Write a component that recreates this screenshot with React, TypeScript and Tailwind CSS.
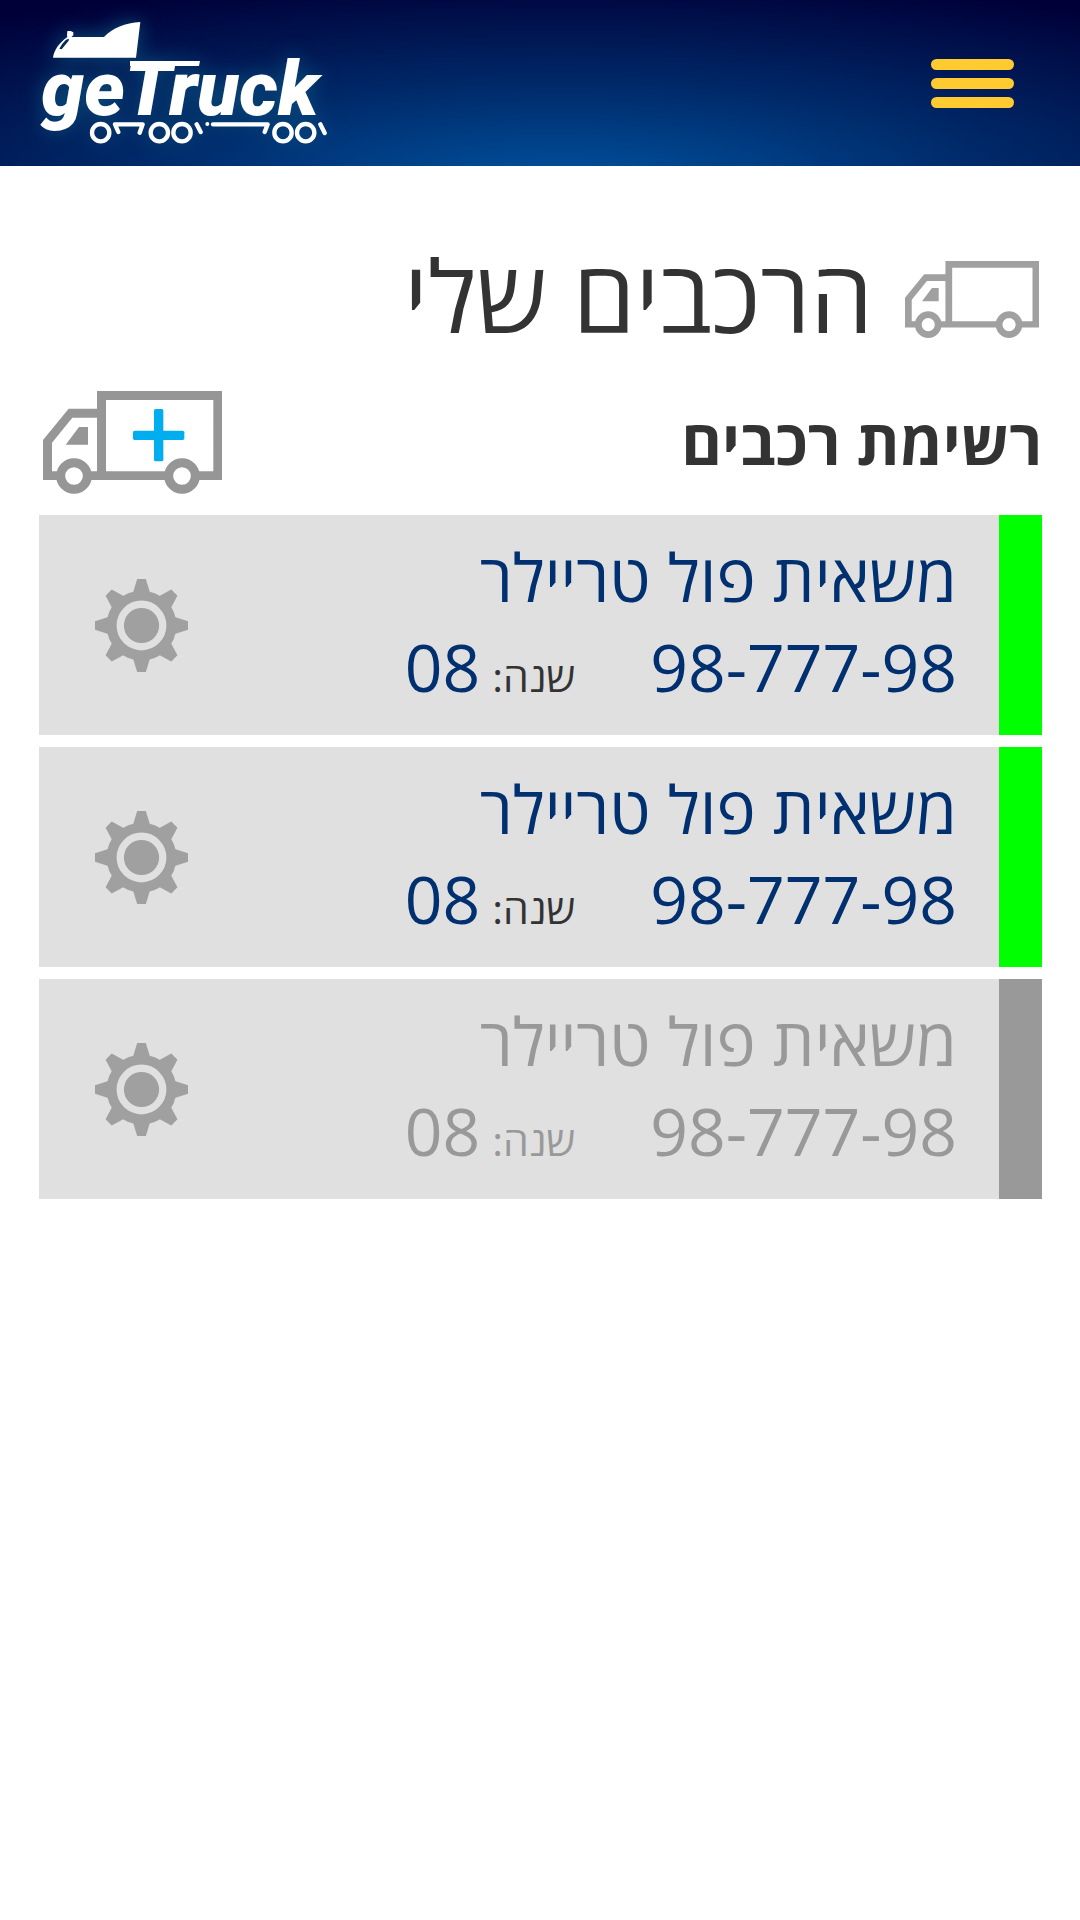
type Vehicle = {
  id: number
  name: string
  plate: string
  year: string
  active: boolean
}

const vehicles: Vehicle[] = [
  { id: 1, name: 'משאית פול טריילר', plate: '98-777-98', year: '08', active: true },
  { id: 2, name: 'משאית פול טריילר', plate: '98-777-98', year: '08', active: true },
  { id: 3, name: 'משאית פול טריילר', plate: '98-777-98', year: '08', active: false },
]

function Logo() {
  return (
    <svg
      viewBox="30 30 864 378"
      className="w-[288px] drop-shadow-[0_0_10px_#0a4f7c]"
      direction="ltr"
      role="img"
      aria-label="geTruck"
    >
      {/* cab */}
      <path
        fill="#fff"
        fillRule="evenodd"
        d="M69 143C72 122 84 102 112 81L111 76L112 63L122 63L130 67L130 76L124 81H222C248 54 285 39 331 36L318 143ZM88 116L95 118L116 92L117 86L108 89Q96 100 88 116Z"
      />
      <text
        x="34"
        y="316"
        fill="#fff"
        fontSize="230"
        className="font-['Roboto',sans-serif] font-black italic"
      >
        geTruck
      </text>
      {/* roof line */}
      <path fill="#fff" d="M300 153H510L507 168H300Z" />
      {/* chassis and wheels */}
      <g fill="none" stroke="#fff" strokeWidth="13">
        <circle cx="212" cy="368" r="26" />
        <circle cx="388" cy="368" r="26" />
        <circle cx="456" cy="368" r="26" />
        <circle cx="759" cy="368" r="26" />
        <circle cx="827" cy="368" r="26" />
        <path strokeLinecap="round" strokeLinejoin="round" d="M265 366L255 343H338L329 368M500 343L512 366M549 343H713L704 366M871 343L884 369" />
      </g>
      <circle cx="532" cy="342" r="6" fill="#fff" />
    </svg>
  )
}

function Truck({ className, plus }: { className: string; plus?: boolean }) {
  return (
    <svg viewBox="39 33 537 309" className={className} fill="currentColor" aria-hidden="true">
      <path
        fillRule="evenodd"
        d="M201 33H576V300H39V180L116 86H201ZM228 60V274H550V60ZM127 113L66 188V274H201V113Z"
      />
      <path d="M107 194L147 141H174V194Z" />
      <circle cx="132" cy="288" r="40" fill="#fff" stroke="currentColor" strokeWidth="27" />
      <circle cx="456" cy="288" r="40" fill="#fff" stroke="currentColor" strokeWidth="27" />
      {plus && (
        <g fill="#00aeef">
          <rect x="309" y="152" width="154" height="28" rx="5" />
          <rect x="372" y="87" width="28" height="157" rx="5" />
        </g>
      )}
    </svg>
  )
}

function Gear() {
  return (
    <svg viewBox="-140 -140 280 280" className="w-[93px] text-[#a0a0a0]" fill="currentColor" aria-hidden="true">
      {[0, 45, 90, 135, 180, 225, 270, 315].map((deg) => (
        <path key={deg} transform={`rotate(${deg})`} d="M-13 -140H13L26 -98H-26Z" />
      ))}
      <circle r="90" fill="none" stroke="currentColor" strokeWidth="30" />
      <circle r="53" />
    </svg>
  )
}

function VehicleCard({ vehicle }: { vehicle: Vehicle }) {
  const { name, plate, year, active } = vehicle
  return (
    <li className="flex bg-[#e0e0e0]">
      <div className={active ? 'w-[43px] bg-[#00ff00]' : 'w-[43px] bg-[#999999]'} />
      <div className="flex flex-1 items-center justify-between pr-[42px] pl-14">
        <div
          className={
            active
              ? 'pt-4 pb-6 text-[66px] leading-[90px] text-[#003070]'
              : 'pt-4 pb-6 text-[66px] leading-[90px] text-[#999999]'
          }
        >
          <h3>{name}</h3>
          <p className="flex items-baseline">
            <span dir="ltr">{plate}</span>
            <span
              className={
                active
                  ? 'mr-[75px] text-[41px] leading-none text-[#333333]'
                  : 'mr-[75px] text-[41px] leading-none'
              }
            >
              שנה:
            </span>
            <span className="mr-3">{year}</span>
          </p>
        </div>
        <button type="button" aria-label="הגדרות רכב">
          <Gear />
        </button>
      </div>
    </li>
  )
}

export default function App() {
  return (
    <div dir="rtl" className="min-h-screen bg-white font-['Open_Sans','Noto_Sans',sans-serif] text-[#333333]">
      <header className="flex items-center justify-between bg-[radial-gradient(ellipse_85%_125%_at_52%_110%,#00529f_0%,#002766_50%,#000038_100%)] py-5 pr-[66px] pl-10">
        <button type="button" aria-label="תפריט" className="flex flex-col gap-2">
          <span className="h-[11px] w-[83px] rounded-full bg-[#ffcb31]" />
          <span className="h-[11px] w-[83px] rounded-full bg-[#ffcb31]" />
          <span className="h-[11px] w-[83px] rounded-full bg-[#ffcb31]" />
        </button>
        <Logo />
      </header>

      <main className="pt-[78px] pr-[38px] pl-[39px]">
        <div className="flex items-center gap-8 pr-[3px]">
          <Truck className="mt-2 w-[134px] text-[#a0a0a0]" />
          <h1 className="pb-1 text-[100px] leading-[100px]">הרכבים שלי</h1>
        </div>

        <div className="mt-[43px] flex items-center justify-between">
          <h2 className="pb-1 text-[62px] leading-[76px] font-bold">רשימת רכבים</h2>
          <button type="button" aria-label="הוספת רכב" className="ml-1">
            <Truck plus className="w-[179px] text-[#969696]" />
          </button>
        </div>

        <ul className="mt-[21px] flex flex-col gap-3">
          {vehicles.map((v) => (
            <VehicleCard key={v.id} vehicle={v} />
          ))}
        </ul>
      </main>
    </div>
  )
}
